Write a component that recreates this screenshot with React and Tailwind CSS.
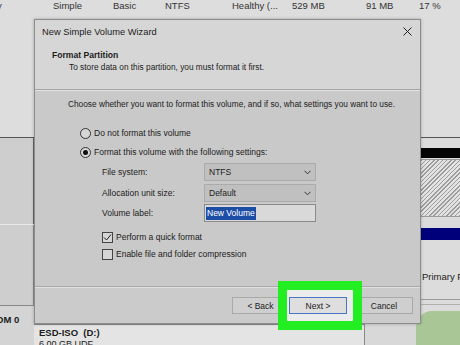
import React from "react";

function Radio({ checked, children }) {
  return (
    <div className="flex items-center h-[14px] pl-[45px]">
      <div className="w-[11px] h-[11px] rounded-full border border-[#333] bg-[#d6d6d6] flex items-center justify-center">
        {checked && <div className="w-[5px] h-[5px] rounded-full bg-[#111]" />}
      </div>
      <span className="ml-[3px]">{children}</span>
    </div>
  );
}

function Check({ checked, children }) {
  return (
    <div className="flex items-center h-[14px] pl-[67px]">
      <div className="w-[11px] h-[11px] border border-[#444] bg-[#d6d6d6] flex items-center justify-center">
        {checked && (
          <svg width="9" height="9" viewBox="0 0 9 9">
            <path d="M1 4.5 L3.5 7 L8 1.5" fill="none" stroke="#222" strokeWidth="1" />
          </svg>
        )}
      </div>
      <span className="ml-[3px]">{children}</span>
    </div>
  );
}

function Select({ value }) {
  return (
    <div className="w-[112px] h-[18px] border border-[#ababab] bg-[#c0c0c0] flex items-center justify-between pl-[4px] pr-[4px]">
      <span>{value}</span>
      <svg width="7" height="5" viewBox="0 0 7 5">
        <path d="M0.5 0.8 L3.5 3.8 L6.5 0.8" fill="none" stroke="#333" strokeWidth="1" />
      </svg>
    </div>
  );
}

export default function App() {
  return (
    <div
      className="relative w-[460px] h-[345px] overflow-hidden bg-[#dddddd] text-[#1c1c1c] text-[8.5px] leading-[12px]"
      style={{ fontFamily: '"Liberation Sans", Arial, sans-serif' }}
    >
      {/* background: disk management */}
      <div className="flex flex-col h-full">
        <div className="h-[137px] shrink-0 relative">
          <div className="flex h-[12px] items-center text-[9.5px] text-[#333]">
            <span className="-ml-[3px]">y</span>
          </div>
        </div>
        <div className="flex flex-1 min-h-0 border-t border-[#555]">
          {/* left column */}
          <div className="w-[34px] flex flex-col min-h-0 overflow-hidden">
            <div className="h-[86px] shrink-0 bg-[#cecece] border-r border-[#666]" />
            <div className="h-[1px] shrink-0 bg-[#e8e8e8]" />
            <div className="h-[80px] shrink-0 bg-[#cecece] border-r border-[#888]" />
            <div className="h-[1px] shrink-0 bg-[#888]" />
            <div className="flex-1 bg-[#d4d4d4] pt-[8px] font-bold text-[9.5px] -ml-[4px]">OM 0</div>
          </div>
          {/* middle column */}
          <div className="flex-1 flex flex-col min-h-0 overflow-hidden">
            <div className="h-[186px] shrink-0 bg-[#d0d0d0]" />
            <div className="flex flex-1 min-h-0">
              <div className="w-[331px] bg-[#e4e4e4] border-t border-r border-[#8a8a8a] pl-[5px] pt-[2px]">
                <div className="font-bold text-[9.5px]">ESD-ISO&nbsp;&nbsp;(D:)</div>
                <div className="text-[9px] -mt-[1px]">6.00 GB UDF</div>
              </div>
              <div className="flex-1 bg-[#d8d8d8]" />
            </div>
          </div>
          {/* right column */}
          <div className="w-[39px] flex flex-col min-h-0 overflow-hidden bg-[#dcdcdc]">
            <div className="h-[10px] shrink-0" />
            <div className="h-[10px] shrink-0 bg-[#050505]" />
            <div className="h-[1px] shrink-0" />
            <div className="h-[58px] shrink-0 border-y border-[#9a9a9a] bg-[repeating-linear-gradient(135deg,#9c9c9c_0px,#9c9c9c_1px,#e2e2e2_1px,#e2e2e2_3px)]" />
            <div className="h-[11px] shrink-0" />
            <div className="h-[12px] shrink-0 bg-[#00007a]" />
            <div className="h-[31px] shrink-0" />
            <div className="pl-[1px] text-[9.5px] whitespace-nowrap shrink-0">Primary Partition</div>
            <div className="h-[17px] shrink-0 border-b border-[#9a9a9a]" />
            <div className="h-[5px] shrink-0 border-b border-[#b0b0b0]" />
          </div>
        </div>
      </div>

      {/* column texts of top table */}
      <div className="absolute left-0 top-0 h-[12px] w-full text-[9.5px] text-[#333]">
        <span className="absolute left-[53px] top-0">Simple</span>
        <span className="absolute left-[113px] top-0">Basic</span>
        <span className="absolute left-[165px] top-0">NTFS</span>
        <span className="absolute left-[232px] top-0">Healthy (...</span>
        <span className="absolute left-[292px] top-0">529 MB</span>
        <span className="absolute left-[366px] top-0">91 MB</span>
        <span className="absolute left-[419px] top-0">17 %</span>
      </div>

      {/* green decoration */}
      <div className="absolute left-[416px] top-[311px] w-[60px] h-[50px] rounded-tl-[16px] bg-[#a9c796]" />

      {/* wizard dialog */}
      <div className="absolute left-[34px] top-[19px] w-[387px] h-[305px] border border-[#8c8c8c] bg-[#c9c9c9] flex flex-col shadow-[0_0_3px_rgba(0,0,0,0.25)]">
        <div className="bg-[#d6d6d6] border-b border-[#a4a4a4]">
          <div className="h-[23px] flex items-center justify-between pl-[7px] pr-[8px] text-[9.3px]">
            <span>New Simple Volume Wizard</span>
            <svg width="9" height="9" viewBox="0 0 9 9">
              <path d="M0.5 0.5 L8.5 8.5 M8.5 0.5 L0.5 8.5" stroke="#222" strokeWidth="1" />
            </svg>
          </div>
          <div className="h-[46px] pl-[17px] pt-[6px]">
            <div className="font-bold text-[8.6px]">Format Partition</div>
            <div className="pl-[17px] text-[8.3px]">To store data on this partition, you must format it first.</div>
          </div>
        </div>
        <div className="h-[197px] border-t border-[#e2e2e2] border-b border-b-[#a8a8a8] flex flex-col">
          <div className="pl-[33px] pt-[7px] whitespace-nowrap text-[8.3px]">
            Choose whether you want to format this volume, and if so, what settings you want to use.
          </div>
          <div className="mt-[16px]">
            <Radio>Do not format this volume</Radio>
          </div>
          <div className="mt-[5px]">
            <Radio checked>Format this volume with the following settings:</Radio>
          </div>
          <div className="mt-[4px] flex items-center pl-[67px] h-[18px]">
            <span className="w-[102px]">File system:</span>
            <Select value="NTFS" />
          </div>
          <div className="mt-[3px] flex items-center pl-[67px] h-[18px]">
            <span className="w-[102px]">Allocation unit size:</span>
            <Select value="Default" />
          </div>
          <div className="mt-[2px] flex items-center pl-[67px] h-[18px]">
            <span className="w-[102px]">Volume label:</span>
            <div className="w-[112px] h-[18px] border border-[#8a8a8a] bg-[#d9d9d9] flex items-center pl-[1px]">
              <span className="bg-[#1d4ea6] text-white px-[1px] leading-[13px]">New Volume</span>
            </div>
          </div>
          <div className="mt-[8px]">
            <Check checked>Perform a quick format</Check>
          </div>
          <div className="mt-[3px]">
            <Check>Enable file and folder compression</Check>
          </div>
        </div>
        <div className="flex-1 border-t border-[#e0e0e0] bg-[#cbcbcb] flex justify-end items-start pt-[9px] pr-[7px]">
          <div className="w-[57px] h-[17px] border border-[#a9a9a9] bg-[#cfcfcf] flex items-center justify-center">&lt; Back</div>
          <div className="relative z-20 w-[58px] h-[17px] border border-[#4a74c4] bg-[#dedede] flex items-center justify-center">Next &gt;</div>
          <div className="ml-[8px] w-[58px] h-[17px] border border-[#a9a9a9] bg-[#cfcfcf] flex items-center justify-center">Cancel</div>
        </div>
      </div>

      {/* green highlight */}
      <div className="absolute z-10 left-[278px] top-[281px] w-[84px] h-[49px] border-[9px] border-[#22ee22] bg-[#ececec]" />
    </div>
  );
}
